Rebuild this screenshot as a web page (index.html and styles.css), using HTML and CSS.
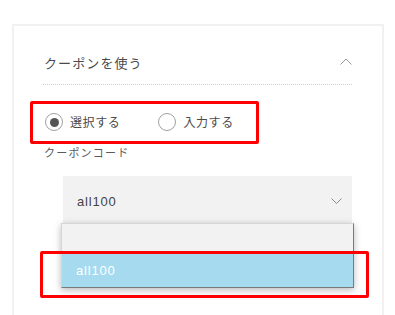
FILE: index.html
```html
<!DOCTYPE html>
<html lang="ja">
<head>
<meta charset="utf-8">
<link rel="stylesheet" href="styles.css">
</head>
<body>
<div class="card">
  <div class="acc-head">
    <span class="acc-title">クーポンを使う</span>
    <svg class="chev-up" width="12" height="7" viewBox="0 0 12 7"><path d="M0.5 6.5 L6 1 L11.5 6.5" fill="none" stroke="#9a9a9a" stroke-width="1"/></svg>
  </div>
  <div class="acc-body">
    <div class="radios">
      <label class="radio"><span class="dot on"></span><span class="rlabel">選択する</span></label>
      <label class="radio"><span class="dot"></span><span class="rlabel">入力する</span></label>
    </div>
    <div class="field-label">クーポンコード</div>
    <div class="select">
      <span class="sel-value">all100</span>
      <svg class="chev-down" width="11" height="6" viewBox="0 0 11 6"><path d="M0.5 0.5 L5.5 5.5 L10.5 0.5" fill="none" stroke="#8a8a8a" stroke-width="1"/></svg>
      <div class="menu">
        <div class="opt empty"></div>
        <div class="opt active">all100</div>
      </div>
    </div>
  </div>
</div>
<div class="mark mark-radios"></div>
<div class="mark mark-option"></div>
</body>
</html>
```
FILE: styles.css
```css
html, body {
  margin: 0;
  padding: 0;
  background: #fff;
}
body {
  width: 395px;
  height: 315px;
  overflow: hidden;
  position: relative;
  font-family: "Noto Sans CJK JP", "Noto Sans", sans-serif;
  color: #555;
}
.card {
  margin: 24px 11px 0 12px;
  border: 2px solid #f1f1f1;
  border-bottom: 0;
  padding: 0 30px 0 29px;
  height: 289px;
}
.acc-head {
  display: flex;
  align-items: center;
  justify-content: space-between;
  padding: 27px 0 11px;
  border-bottom: 1px dotted #cfcfcf;
}
.acc-title {
  font-size: 13px;
  line-height: 20px;
  letter-spacing: 1.1px;
  color: #4a4a4a;
  padding-left: 1px;
}
.chev-up {
  display: block;
  margin-top: -3px;
}
.acc-body {
  padding-top: 28px;
}
.radios {
  display: flex;
  align-items: center;
  padding-left: 2px;
}
.radio {
  display: flex;
  align-items: center;
  height: 18px;
}
.radio + .radio {
  margin-left: 38px;
}
.dot {
  width: 16px;
  height: 16px;
  border: 1px solid #a0a0a0;
  border-radius: 50%;
  box-sizing: content-box;
  display: flex;
  align-items: center;
  justify-content: center;
  background: #fff;
}
.dot.on::after {
  content: "";
  width: 9px;
  height: 9px;
  border-radius: 50%;
  background: #555;
}
.rlabel {
  margin-left: 7px;
  font-size: 12px;
  line-height: 18px;
  letter-spacing: 0.6px;
  color: #4a4a4a;
}
.field-label {
  margin-top: 13px;
  font-size: 11px;
  line-height: 16px;
  letter-spacing: 1.2px;
  color: #5a5a5a;
  padding-left: 1px;
}
.select {
  position: relative;
  margin: 16px 0 0 20px;
  height: 48px;
  background: #f2f2f2;
  display: flex;
  align-items: center;
  justify-content: space-between;
  padding: 0 10px 0 14px;
}
.sel-value {
  font-family: "Liberation Sans", Arial, sans-serif;
  font-size: 13px;
  letter-spacing: 0.8px;
  color: #444;
  margin-top: 2px;
}
.chev-down {
  display: block;
  margin-top: 2px;
}
.menu {
  position: absolute;
  top: 47px;
  left: -2px;
  right: -2px;
  border: 1px solid #d6d6d6;
  border-right-color: #7a7a7a;
  border-bottom-color: #7a7a7a;
  box-shadow: 0 2px 7px rgba(0, 0, 0, 0.28);
  background: #f2f2f2;
}
.opt {
  height: 33px;
  display: flex;
  align-items: center;
  padding-left: 14px;
  font-family: "Liberation Sans", Arial, sans-serif;
  font-size: 13px;
  letter-spacing: 0.8px;
}
.opt.empty {
  height: 30px;
}
.opt.active {
  background: #a6daef;
  color: #fff;
}
.mark {
  position: absolute;
  border: 3px solid #ff0000;
  border-radius: 2px;
  box-sizing: border-box;
}
.mark-radios {
  left: 30px;
  top: 101px;
  width: 229px;
  height: 43px;
}
.mark-option {
  left: 40px;
  top: 251px;
  width: 329px;
  height: 47px;
}
```
